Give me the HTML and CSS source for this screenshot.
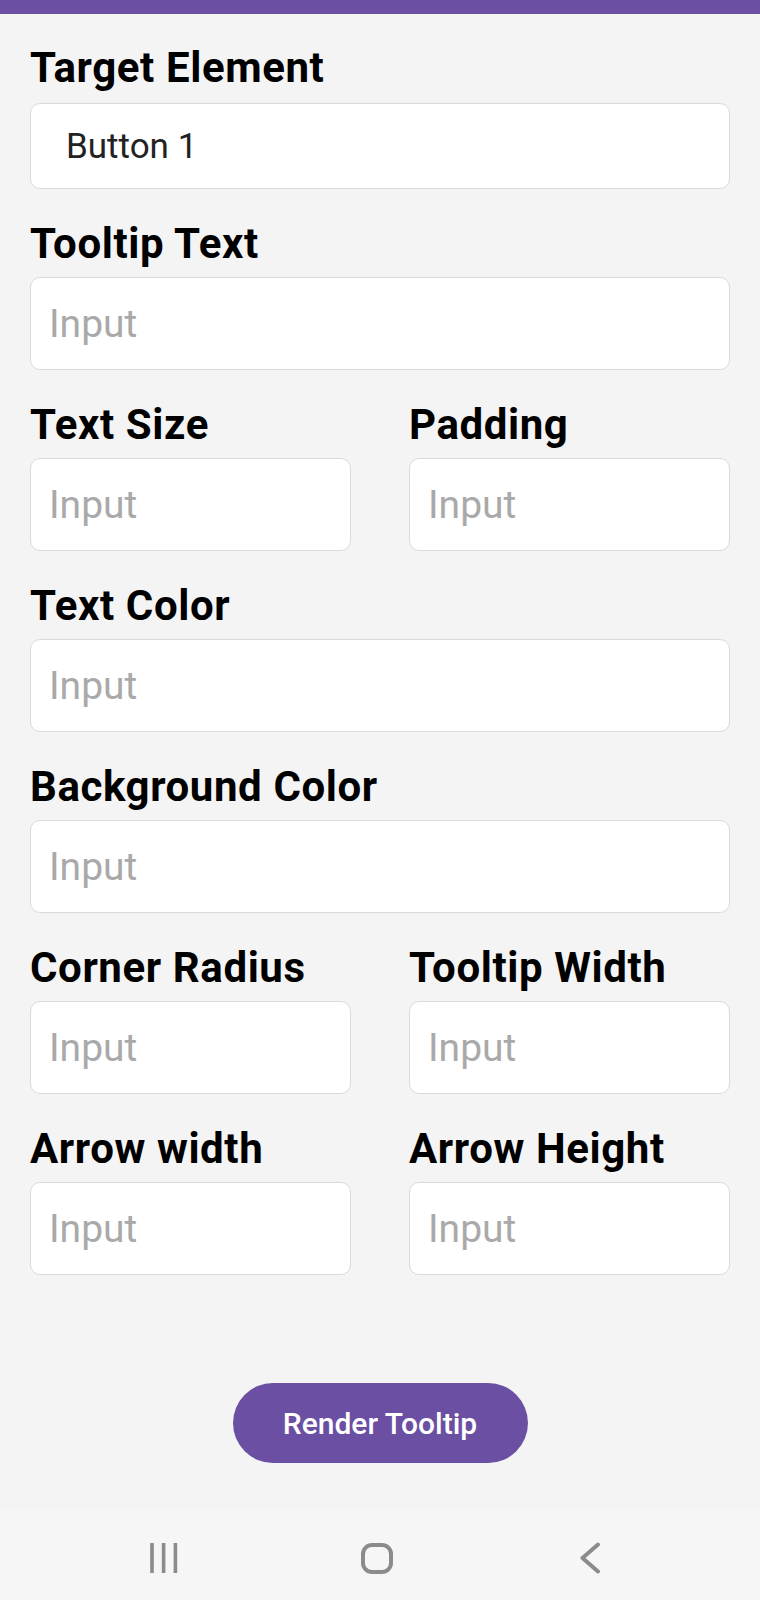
FILE: index.html
```html
<!DOCTYPE html>
<html lang="en">
<head>
<meta charset="utf-8">
<title>Tooltip Builder</title>
<link rel="stylesheet" href="styles.css">
</head>
<body>
<div class="page">
  <div class="topbar"></div>
  <form class="form">
    <div class="field">
      <label class="label">Target Element</label>
      <div class="select">Button 1</div>
    </div>
    <div class="field">
      <label class="label">Tooltip Text</label>
      <input class="input" placeholder="Input">
    </div>
    <div class="row">
      <div class="field">
        <label class="label">Text Size</label>
        <input class="input" placeholder="Input">
      </div>
      <div class="field">
        <label class="label">Padding</label>
        <input class="input" placeholder="Input">
      </div>
    </div>
    <div class="field">
      <label class="label">Text Color</label>
      <input class="input" placeholder="Input">
    </div>
    <div class="field">
      <label class="label">Background Color</label>
      <input class="input" placeholder="Input">
    </div>
    <div class="row">
      <div class="field">
        <label class="label">Corner Radius</label>
        <input class="input" placeholder="Input">
      </div>
      <div class="field">
        <label class="label">Tooltip Width</label>
        <input class="input" placeholder="Input">
      </div>
    </div>
    <div class="row">
      <div class="field">
        <label class="label">Arrow width</label>
        <input class="input" placeholder="Input">
      </div>
      <div class="field">
        <label class="label">Arrow Height</label>
        <input class="input" placeholder="Input">
      </div>
    </div>
    <div class="actions">
      <button type="button" class="btn">Render Tooltip</button>
    </div>
  </form>
  <nav class="navbar">
    <div class="nav-cell">
      <svg width="28" height="30" viewBox="0 0 28 30"><g stroke="#8b8b8b" stroke-width="3.6"><line x1="2" y1="0" x2="2" y2="30"/><line x1="13.6" y1="0" x2="13.6" y2="30"/><line x1="25.4" y1="0" x2="25.4" y2="30"/></g></svg>
    </div>
    <div class="nav-cell">
      <svg width="32" height="31" viewBox="0 0 32 31"><rect x="2" y="2" width="28" height="27" rx="9" fill="none" stroke="#8b8b8b" stroke-width="4"/></svg>
    </div>
    <div class="nav-cell">
      <svg width="22" height="32" viewBox="0 0 22 32"><polyline points="19,2.5 3.5,16 19,29.5" fill="none" stroke="#8b8b8b" stroke-width="4" stroke-linecap="round" stroke-linejoin="round"/></svg>
    </div>
  </nav>
</div>
</body>
</html>
```

FILE: styles.css
```css
* { box-sizing: border-box; }
html, body {
  margin: 0;
  padding: 0;
  background: #f4f4f4;
}
body {
  font-family: Roboto, "Liberation Sans", sans-serif;
}
.page {
  display: flex;
  flex-direction: column;
  min-height: 1600px;
}
.topbar {
  height: 14px;
  background: #6a4fa3;
}
.form {
  display: flex;
  flex-direction: column;
  gap: 30px;
  padding: 29px 30px 0;
}
.field {
  display: flex;
  flex-direction: column;
}
.label {
  font-weight: 700;
  font-size: 42px;
  line-height: 50px;
  letter-spacing: 0.6px;
  color: #000;
  margin-bottom: 8px;
}
.select {
  margin-top: 2px;
  height: 86px;
  background: #fff;
  border: 1px solid #dadada;
  border-radius: 10px;
  padding-left: 35px;
  display: flex;
  align-items: center;
  font-size: 35px;
  color: #222;
}
.input {
  height: 93px;
  width: 100%;
  background: #fff;
  border: 1px solid #dadada;
  border-radius: 10px;
  padding: 0 0 0 18px;
  font-family: Roboto, "Liberation Sans", sans-serif;
  font-size: 39px;
  color: #222;
  outline: none;
}
.input::placeholder {
  color: #a9a9a9;
}
.row {
  display: grid;
  grid-template-columns: 1fr 1fr;
  column-gap: 58px;
}
.actions {
  display: flex;
  justify-content: center;
  margin-top: 78px;
}
.btn {
  width: 295px;
  height: 80px;
  border: none;
  border-radius: 40px;
  background: #6a4fa3;
  color: #fff;
  font-family: Roboto, "Liberation Sans", sans-serif;
  font-weight: 500;
  font-size: 30px;
  padding: 0;
}
.navbar {
  margin-top: auto;
  height: 90px;
  background: #f6f6f6;
  display: flex;
  align-items: center;
  padding: 6px 0 0 57px;
}
.nav-cell {
  width: 213px;
  display: flex;
  justify-content: center;
  align-items: center;
}
```
